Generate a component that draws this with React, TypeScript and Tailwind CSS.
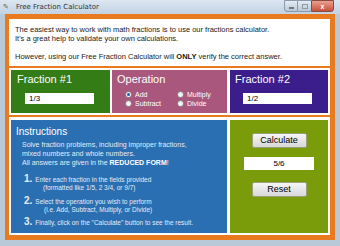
import React from 'react';

const Radio = ({ label, checked }: { label: string; checked?: boolean }) => (
  <div className="flex items-center gap-[3px] h-[9px]">
    <span className="w-[7px] h-[7px] rounded-full bg-gradient-to-b from-[#e8e8e8] to-[#ffffff] border border-[#8a8a8a] flex items-center justify-center">
      {checked && <span className="w-[3px] h-[3px] rounded-full bg-[#2a5aa0]" />}
    </span>
    <span className="text-[7px] text-white leading-none">{label}</span>
  </div>
);

const Step = ({ n, line1, line2, indent }: { n: string; line1: string; line2?: string; indent: string }) => (
  <div className="flex flex-col">
    <div className="flex items-baseline gap-[3px]">
      <span className="text-[10px] font-bold leading-[10px]">{n}</span>
      <span className="text-[6.5px] leading-none">{line1}</span>
    </div>
    {line2 && <div className={`text-[6.5px] leading-none mt-[1px] ${indent}`}>{line2}</div>}
  </div>
);

const Btn = ({ label }: { label: string }) => (
  <div className="w-[55px] h-[15px] border border-[#9aa07a] bg-gradient-to-b from-[#f6f6f6] to-[#d8d8d8] rounded-[2px] flex items-center justify-center text-[9px] text-black leading-none">
    {label}
  </div>
);

export default function App() {
  return (
    <div className="w-[340px] h-[246px] bg-[#b9c9d8] flex flex-col overflow-hidden" style={{ fontFamily: '"Liberation Sans", Arial, sans-serif' }}>
      {/* title bar */}
      <div className="h-[14px] shrink-0 flex items-center bg-gradient-to-b from-[#dbe6f1] to-[#c3d3e3] relative">
        <span className="ml-[3px] w-[8px] h-[8px] text-[7px] leading-none text-[#6a5a40]">✎</span>
        <span className="ml-[5px] text-[7px] text-[#333] leading-none" style={{ fontFamily: '"DejaVu Sans", sans-serif' }}>Free Fraction Calculator</span>
        <div className="absolute right-[6px] top-0 flex h-[12px]">
          <div className="w-[14px] border border-[#8a99aa] rounded-bl-[3px] bg-gradient-to-b from-[#e4ecf4] to-[#b8c8d8] flex items-center justify-center">
            <span className="w-[5px] h-[2px] bg-white border border-[#777] mt-[3px]" />
          </div>
          <div className="w-[13px] border-y border-[#8a99aa] bg-gradient-to-b from-[#e4ecf4] to-[#b8c8d8] flex items-center justify-center">
            <span className="w-[6px] h-[5px] border border-[#999]" />
          </div>
          <div className="w-[23px] border border-[#8a4a40] rounded-br-[3px] bg-gradient-to-b from-[#e8a090] to-[#c8503a] flex items-center justify-center text-white text-[7px] font-bold leading-none">
            x
          </div>
        </div>
      </div>
      {/* window body */}
      <div className="h-[232px] px-[5px] pb-[6px]">
        <div className="w-[330px] h-[226px] bg-[#e97a1e] pt-[5px] pl-[4px] pr-[5px] pb-[5px] flex flex-col gap-[2px]">
          {/* header */}
          <div className="h-[47px] shrink-0 bg-white px-[6px] pt-[6px] text-[7.5px] text-[#1a1a1a] leading-[9px]">
            <div>The easiest way to work with math fractions is to use our fractions calculator.</div>
            <div>It's a great help to validate your own calculations.</div>
            <div className="mt-[9px]">
              However, using our Free Fraction Calculator will <b>ONLY</b> verify the correct answer.
            </div>
          </div>
          {/* row 1 */}
          <div className="h-[47px] shrink-0 bg-white p-[2px] flex gap-[2px]">
            <div className="w-[99px] bg-[#347c16] flex flex-col pl-[6px] pt-[4px]">
              <div className="text-[11px] text-white leading-none">Fraction #1</div>
              <div className="mt-[8px] ml-[8px] w-[69px] h-[11px] bg-white text-[8px] leading-[11px] pl-[4px] text-black">1/3</div>
            </div>
            <div className="w-[115px] bg-[#a9577c] flex flex-col pl-[5px] pt-[4px]">
              <div className="text-[11px] text-white leading-none">Operation</div>
              <div className="mt-[5px] ml-[8px] flex">
                <div className="flex flex-col w-[52px]">
                  <Radio label="Add" checked />
                  <Radio label="Subtract" />
                </div>
                <div className="flex flex-col">
                  <Radio label="Multiply" />
                  <Radio label="Divide" />
                </div>
              </div>
            </div>
            <div className="ml-[1px] w-[98px] bg-[#3b1d8c] flex flex-col pl-[5px] pt-[4px]">
              <div className="text-[11px] text-white leading-none">Fraction #2</div>
              <div className="mt-[8px] ml-[8px] w-[69px] h-[11px] bg-white text-[8px] leading-[11px] pl-[4px] text-black">1/2</div>
            </div>
          </div>
          {/* row 2 */}
          <div className="flex-1 min-h-0 bg-white p-[2px] pt-[3px] flex gap-[3px]">
            <div className="w-[216px] bg-[#2a6fb2] flex flex-col pl-[5px] pt-[7px] text-[#e4ecf6] overflow-hidden">
              <div className="text-[10px] text-white leading-none">Instructions</div>
              <div className="ml-[6px] mt-[3px] text-[7px] leading-[9px]">
                <div>Solve fraction problems, including improper fractions,</div>
                <div>mixed numbers and whole numbers.</div>
                <div>All answers are given in the <b className="text-white">REDUCED FORM</b>!</div>
              </div>
              <div className="ml-[8px] mt-[7px] flex flex-col gap-[4px]">
                <Step n="1." line1="Enter each fraction in the fields provided" line2="(formatted like 1/5, 2 3/4, or 9/7)" indent="ml-[19px]" />
                <Step n="2." line1="Select the operation you wish to perform" line2="(i.e. Add, Subtract, Multiply, or Divide)" indent="ml-[20px]" />
                <Step n="3." line1={'Finally, click on the "Calculate" button to see the result.'} indent="" />
              </div>
            </div>
            <div className="w-[98px] bg-[#7a9c0b] flex flex-col items-center pt-[13px]">
              <Btn label="Calculate" />
              <div className="mt-[9px] w-[70px] h-[13px] bg-white text-[8px] leading-[13px] text-center text-black">5/6</div>
              <div className="mt-[12px]">
                <Btn label="Reset" />
              </div>
            </div>
          </div>
        </div>
      </div>
    </div>
  );
}
